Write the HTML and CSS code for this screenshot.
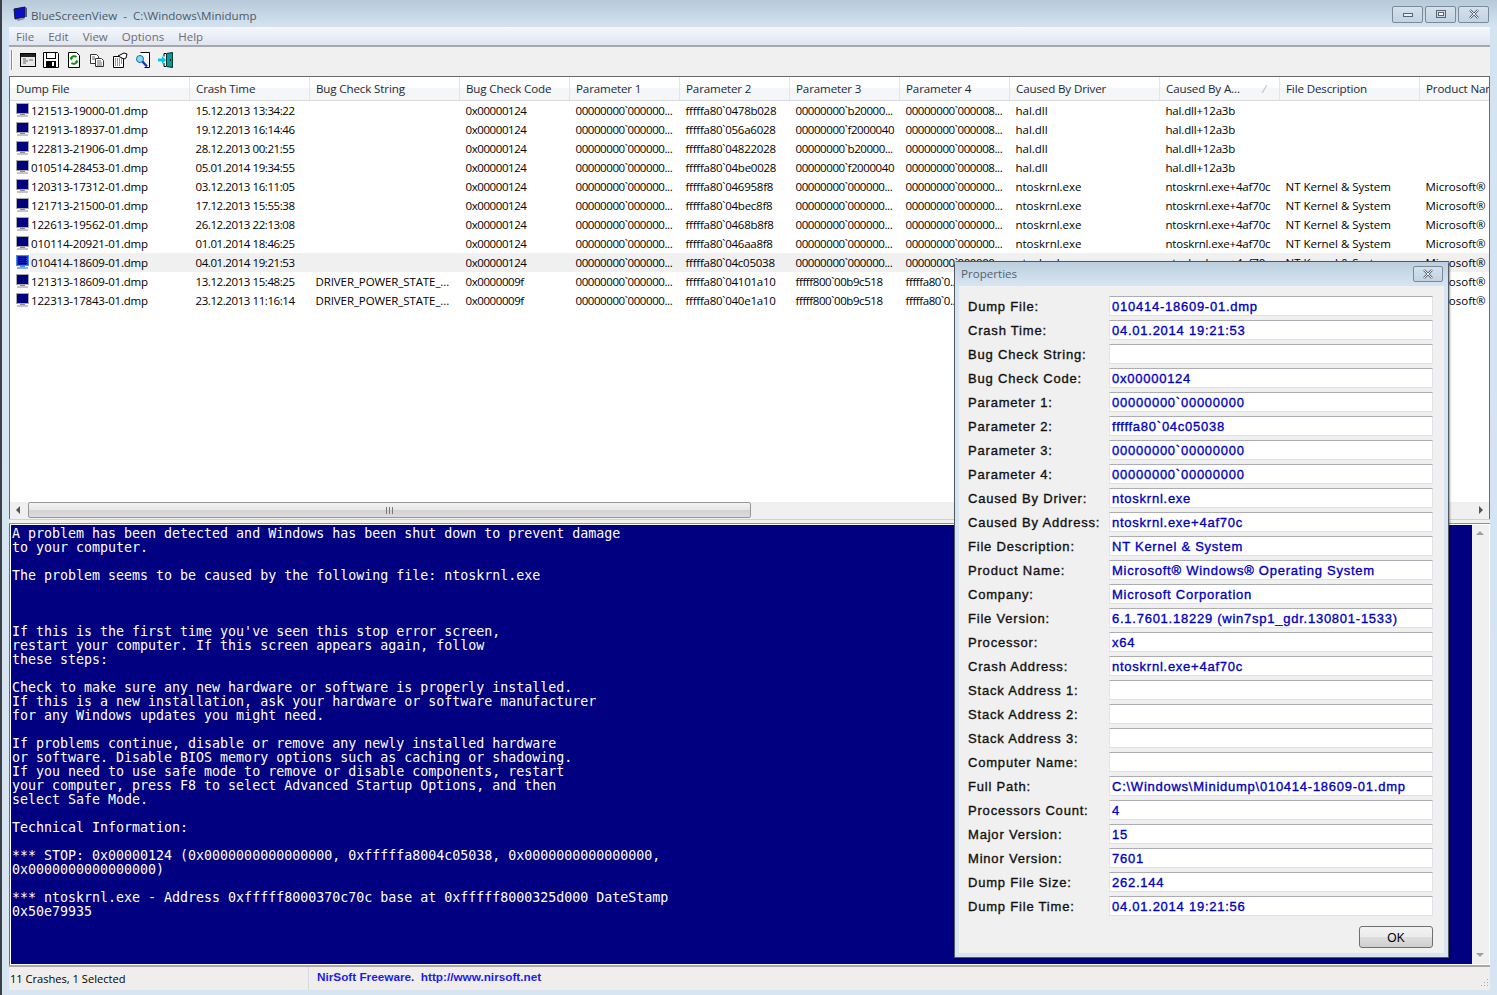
FILE: index.html
```html
<!DOCTYPE html>
<html lang="en">
<head>
<meta charset="utf-8">
<title>BlueScreenView</title>
<link rel="stylesheet" href="styles.css">
</head>
<body>
<svg class="defs" width="0" height="0" aria-hidden="true">
  <defs>
    <symbol id="pc" viewBox="0 0 15 15">
      <rect x="1.5" y="0.5" width="12" height="10" fill="#000080" stroke="#a9a9a9"/>
      <rect x="5" y="11" width="5" height="1" fill="#8c8c8c"/>
      <rect x="2" y="12" width="11" height="2" fill="#c4c4c4"/>
    </symbol>
    <symbol id="pcsel" viewBox="0 0 15 15">
      <rect x="1.5" y="0.5" width="12" height="10" fill="#1a3ee0" stroke="#4a8ae8"/>
      <path d="M3 2.5h9M3 4.5h9M3 6.5h9M3 8.5h9M4 1v9M6 1v9M8 1v9M10 1v9" stroke="#000080" stroke-width="1"/>
      <rect x="5" y="11" width="5" height="1" fill="#4a8ae8"/>
      <rect x="2" y="12" width="11" height="2" fill="#7fb0ee"/>
    </symbol>
  </defs>
</svg>
<div class="window">
  <header class="titlebar">
    <svg class="appicon" width="16" height="16" viewBox="0 0 16 16"><path d="M2 3 13 1v10L3 13z" fill="#0a10c8" stroke="#15153a"/><path d="M4 13l2 2 7-2-1-1z" fill="#8a8f9a"/><path d="M13 1l2 1v9l-2 0z" fill="#555a70"/></svg>
    <span class="apptitle">BlueScreenView &nbsp;-&nbsp; C:\Windows\Minidump</span>
    <div class="capbtns">
      <button class="cap capmin"><svg width="12" height="8" viewBox="0 0 12 8"><rect x="1.5" y="3.5" width="9" height="3" fill="#e8edf2" stroke="#5a6470"/></svg></button>
      <button class="cap capmax"><svg width="12" height="10" viewBox="0 0 12 10"><rect x="1.5" y="1.5" width="9" height="7" fill="none" stroke="#5a6470"/><rect x="3.5" y="3.5" width="5" height="3" fill="#fff" stroke="#5a6470"/></svg></button>
      <button class="cap capclose"><svg width="12" height="10" viewBox="0 0 12 10"><path d="M2 1l8 8M10 1 2 9" stroke="#5a6470" stroke-width="2.4"/><path d="M2 1l8 8M10 1 2 9" stroke="#eef2f6" stroke-width="1"/></svg></button>
    </div>
  </header>
  <nav class="menubar"><span>File</span><span>Edit</span><span>View</span><span>Options</span><span>Help</span></nav>
  <div class="toolbar">
    <i class="grip"></i>
    <svg class="tb" width="16" height="16" viewBox="0 0 16 16"><rect x="0.5" y="1.5" width="15" height="13" fill="#e8e8e8" stroke="#000"/><rect x="1" y="2" width="14" height="3" fill="#222"/><path d="M3 7h3M3 9h5M3 11h3M9 8h4" stroke="#666"/></svg>
    <svg class="tb" width="16" height="16" viewBox="0 0 16 16"><path d="M0.5 0.5h14l1 1v14H0.5z" fill="#fff" stroke="#000"/><rect x="3.500" y="0.500" width="9" height="6" fill="#fff" stroke="#000"/><rect x="3" y="9" width="10" height="6" fill="#000"/><rect x="9" y="10" width="2" height="4" fill="#fff"/></svg>
    <svg class="tb" width="16" height="16" viewBox="0 0 16 16"><path d="M2.5 0.5h8l3 3v12h-11z" fill="#fff" stroke="#000"/><path d="M10.5 5A3.5 3.5 0 0 0 5 6.5M5.5 11A3.500 3.500 0 0 0 11 9.500" fill="none" stroke="#109010" stroke-width="2"/><path d="M3.500 5.500 7 6 5 8.500zM12.500 10.500 9 10l2-2.500z" fill="#109010"/></svg>
    <svg class="tb" width="16" height="16" viewBox="0 0 16 16"><path d="M1.500 2.500h6l2 2v7h-8z" fill="#fff" stroke="#333"/><path d="M6.500 6.500h6l2 2v6h-8z" fill="#fff" stroke="#333"/><path d="M3 5h3M3 7h3M8 9h4M8 11h5M8 13h5" stroke="#666"/></svg>
    <svg class="tb" width="16" height="16" viewBox="0 0 16 16"><path d="M1.500 4.500h10v11h-10z" fill="#fff" stroke="#000"/><path d="M3 7h7M3 9h7M3 11h7M3 13h5" stroke="#333" stroke-dasharray="1 1"/><path d="M6 4 12 1l3 1-1 4-2 1z" fill="#fff" stroke="#000"/></svg>
    <svg class="tb" width="16" height="16" viewBox="0 0 16 16"><path d="M5.500 0.500h9v15h-5" fill="#fff" stroke="#000"/><circle cx="5" cy="7" r="3.500" fill="#7fe0e8" stroke="#2060c0"/><path d="M7.500 9.500 12 14.500" stroke="#1830c0" stroke-width="2.400"/></svg>
    <svg class="tb" width="16" height="16" viewBox="0 0 16 16"><path d="M8.500 1.500 14.500 0.500v15l-6-1z" fill="#0a9a9a" stroke="#003030"/><path d="M6 1.500h2M6 1.500v3M6 11v3.500h2" fill="none" stroke="#000"/><path d="M0 6.500h4V4l4 4-4 4V9.500H0z" fill="#00c8e8"/><rect x="12" y="7" width="1" height="2" fill="#002020"/></svg>
  </div>
  <section class="listpane">
    <table class="list">
      <colgroup><col class="c1"><col class="c2"><col class="c3"><col class="c4"><col class="c5"><col class="c5"><col class="c5"><col class="c5"><col class="c3"><col class="c2"><col class="c6"><col class="c7"></colgroup>
      <thead><tr><th>Dump File</th><th>Crash Time</th><th>Bug Check String</th><th>Bug Check Code</th><th>Parameter 1</th><th>Parameter 2</th><th>Parameter 3</th><th>Parameter 4</th><th>Caused By Driver</th><th class="sorted">Caused By A...<span class="sortmark">⁄</span></th><th>File Description</th><th>Product Name</th></tr></thead>
      <tbody>
        <tr><td><svg class="ri"><use href="#pc"/></svg>121513-19000-01.dmp</td><td>15.12.2013 13:34:22</td><td></td><td>0x00000124</td><td>00000000`000000...</td><td>fffffa80`0478b028</td><td>00000000`b20000...</td><td>00000000`000008...</td><td>hal.dll</td><td>hal.dll+12a3b</td><td></td><td></td></tr>
        <tr><td><svg class="ri"><use href="#pc"/></svg>121913-18937-01.dmp</td><td>19.12.2013 16:14:46</td><td></td><td>0x00000124</td><td>00000000`000000...</td><td>fffffa80`056a6028</td><td>00000000`f2000040</td><td>00000000`000008...</td><td>hal.dll</td><td>hal.dll+12a3b</td><td></td><td></td></tr>
        <tr><td><svg class="ri"><use href="#pc"/></svg>122813-21906-01.dmp</td><td>28.12.2013 00:21:55</td><td></td><td>0x00000124</td><td>00000000`000000...</td><td>fffffa80`04822028</td><td>00000000`b20000...</td><td>00000000`000008...</td><td>hal.dll</td><td>hal.dll+12a3b</td><td></td><td></td></tr>
        <tr><td><svg class="ri"><use href="#pc"/></svg>010514-28453-01.dmp</td><td>05.01.2014 19:34:55</td><td></td><td>0x00000124</td><td>00000000`000000...</td><td>fffffa80`04be0028</td><td>00000000`f2000040</td><td>00000000`000008...</td><td>hal.dll</td><td>hal.dll+12a3b</td><td></td><td></td></tr>
        <tr><td><svg class="ri"><use href="#pc"/></svg>120313-17312-01.dmp</td><td>03.12.2013 16:11:05</td><td></td><td>0x00000124</td><td>00000000`000000...</td><td>fffffa80`046958f8</td><td>00000000`000000...</td><td>00000000`000000...</td><td>ntoskrnl.exe</td><td>ntoskrnl.exe+4af70c</td><td>NT Kernel &amp; System</td><td>Microsoft®</td></tr>
        <tr><td><svg class="ri"><use href="#pc"/></svg>121713-21500-01.dmp</td><td>17.12.2013 15:55:38</td><td></td><td>0x00000124</td><td>00000000`000000...</td><td>fffffa80`04bec8f8</td><td>00000000`000000...</td><td>00000000`000000...</td><td>ntoskrnl.exe</td><td>ntoskrnl.exe+4af70c</td><td>NT Kernel &amp; System</td><td>Microsoft®</td></tr>
        <tr><td><svg class="ri"><use href="#pc"/></svg>122613-19562-01.dmp</td><td>26.12.2013 22:13:08</td><td></td><td>0x00000124</td><td>00000000`000000...</td><td>fffffa80`0468b8f8</td><td>00000000`000000...</td><td>00000000`000000...</td><td>ntoskrnl.exe</td><td>ntoskrnl.exe+4af70c</td><td>NT Kernel &amp; System</td><td>Microsoft®</td></tr>
        <tr><td><svg class="ri"><use href="#pc"/></svg>010114-20921-01.dmp</td><td>01.01.2014 18:46:25</td><td></td><td>0x00000124</td><td>00000000`000000...</td><td>fffffa80`046aa8f8</td><td>00000000`000000...</td><td>00000000`000000...</td><td>ntoskrnl.exe</td><td>ntoskrnl.exe+4af70c</td><td>NT Kernel &amp; System</td><td>Microsoft®</td></tr>
        <tr class="sel"><td><svg class="ri"><use href="#pcsel"/></svg><span class="seltext">010414-18609-01.dmp</span></td><td>04.01.2014 19:21:53</td><td></td><td>0x00000124</td><td>00000000`000000...</td><td>fffffa80`04c05038</td><td>00000000`000000...</td><td>00000000`000000...</td><td>ntoskrnl.exe</td><td>ntoskrnl.exe+4af70c</td><td>NT Kernel &amp; System</td><td>Microsoft®</td></tr>
        <tr><td><svg class="ri"><use href="#pc"/></svg>121313-18609-01.dmp</td><td>13.12.2013 15:48:25</td><td>DRIVER_POWER_STATE_...</td><td>0x0000009f</td><td>00000000`000000...</td><td>fffffa80`04101a10</td><td>fffff800`00b9c518</td><td>fffffa80`0...</td><td></td><td></td><td></td><td>Microsoft®</td></tr>
        <tr><td><svg class="ri"><use href="#pc"/></svg>122313-17843-01.dmp</td><td>23.12.2013 11:16:14</td><td>DRIVER_POWER_STATE_...</td><td>0x0000009f</td><td>00000000`000000...</td><td>fffffa80`040e1a10</td><td>fffff800`00b9c518</td><td>fffffa80`0...</td><td></td><td></td><td></td><td>Microsoft®</td></tr>
      </tbody>
    </table>
    <div class="hscroll">
      <span class="arrow al"></span>
      <div class="htrack"><div class="hthumb"><i></i></div></div>
      <span class="arrow ar"></span>
    </div>
  </section>
  <div class="splitter"></div>
  <section class="bsodpane">
    <pre class="bsod">A problem has been detected and Windows has been shut down to prevent damage
to your computer.

The problem seems to be caused by the following file: ntoskrnl.exe



If this is the first time you've seen this stop error screen,
restart your computer. If this screen appears again, follow
these steps:

Check to make sure any new hardware or software is properly installed.
If this is a new installation, ask your hardware or software manufacturer
for any Windows updates you might need.

If problems continue, disable or remove any newly installed hardware
or software. Disable BIOS memory options such as caching or shadowing.
If you need to use safe mode to remove or disable components, restart
your computer, press F8 to select Advanced Startup Options, and then
select Safe Mode.

Technical Information:

*** STOP: 0x00000124 (0x0000000000000000, 0xfffffa8004c05038, 0x0000000000000000,
0x0000000000000000)

*** ntoskrnl.exe - Address 0xfffff8000370c70c base at 0xfffff8000325d000 DateStamp
0x50e79935</pre>
    <div class="vscroll"><span class="arrow au"></span><span class="arrow ad"></span></div>
  </section>
  <footer class="statusbar">
    <div class="st1">11 Crashes, 1 Selected</div>
    <div class="st2">NirSoft Freeware.&nbsp; http://www.nirsoft.net</div>
    <svg class="sizer" width="12" height="12" viewBox="0 0 12 12"><path d="M10 2h1v1h-1zM7 5h1v1H7zM10 5h1v1h-1zM4 8h1v1H4zM7 8h1v1H7zM10 8h1v1h-1z" fill="#a8a8a8"/></svg>
  </footer>
</div>
<aside class="dialog">
  <div class="dlgtitle"><span>Properties</span>
    <button class="cap dlgclose"><svg width="12" height="10" viewBox="0 0 12 10"><path d="M2 1l8 8M10 1 2 9" stroke="#5a6470" stroke-width="2.400"/><path d="M2 1l8 8M10 1 2 9" stroke="#eef2f6" stroke-width="1"/></svg></button>
  </div>
  <div class="dlgbody">
    <dl class="props">
      <dt>Dump File:</dt><dd>010414-18609-01.dmp</dd>
      <dt>Crash Time:</dt><dd>04.01.2014 19:21:53</dd>
      <dt>Bug Check String:</dt><dd></dd>
      <dt>Bug Check Code:</dt><dd>0x00000124</dd>
      <dt>Parameter 1:</dt><dd>00000000`00000000</dd>
      <dt>Parameter 2:</dt><dd>fffffa80`04c05038</dd>
      <dt>Parameter 3:</dt><dd>00000000`00000000</dd>
      <dt>Parameter 4:</dt><dd>00000000`00000000</dd>
      <dt>Caused By Driver:</dt><dd>ntoskrnl.exe</dd>
      <dt>Caused By Address:</dt><dd>ntoskrnl.exe+4af70c</dd>
      <dt>File Description:</dt><dd>NT Kernel &amp; System</dd>
      <dt>Product Name:</dt><dd>Microsoft® Windows® Operating System</dd>
      <dt>Company:</dt><dd>Microsoft Corporation</dd>
      <dt>File Version:</dt><dd>6.1.7601.18229 (win7sp1_gdr.130801-1533)</dd>
      <dt>Processor:</dt><dd>x64</dd>
      <dt>Crash Address:</dt><dd>ntoskrnl.exe+4af70c</dd>
      <dt>Stack Address 1:</dt><dd></dd>
      <dt>Stack Address 2:</dt><dd></dd>
      <dt>Stack Address 3:</dt><dd></dd>
      <dt>Computer Name:</dt><dd></dd>
      <dt>Full Path:</dt><dd>C:\Windows\Minidump\010414-18609-01.dmp</dd>
      <dt>Processors Count:</dt><dd>4</dd>
      <dt>Major Version:</dt><dd>15</dd>
      <dt>Minor Version:</dt><dd>7601</dd>
      <dt>Dump File Size:</dt><dd>262.144</dd>
      <dt>Dump File Time:</dt><dd>04.01.2014 19:21:56</dd>
    </dl>
    <div class="dlgfoot"><button class="okbtn">OK</button></div>
  </div>
</aside>
</body>
</html>
```
FILE: styles.css
```css
* { box-sizing: border-box; }
html, body { margin: 0; height: 995px; overflow: hidden; }
body { font-family: "Open Sans", "Noto Sans", sans-serif; font-size: 12px; color: #000; background: #d7e5f2; position: relative; }
.defs { position: absolute; }
.window { height: 995px; width: 1497px; padding: 0 7px 5px 0; border-left: 2px solid #3c4046; display: flex; flex-direction: column; background: linear-gradient(180deg, #b7cad9 0, #d4e3f0 27px, #d7e5f2 100%); }

.titlebar { height: 27px; display: flex; align-items: center; padding: 3px 0 0 10px; flex: none; }
.appicon { margin-right: 3px; margin-top: -3px; }
.apptitle { color: #4c5964; font-size: 11.6px; }
.capbtns { margin-left: auto; display: flex; gap: 2px; margin-right: 1px; margin-top: -2px; }
.cap { width: 31px; height: 17px; padding: 0; border: 1px solid #7b8a98; border-radius: 2px; background: linear-gradient(180deg, #d5e1ec, #c2d3e2); display: flex; align-items: center; justify-content: center; }

.menubar { height: 20px; margin-left: 7px; flex: none; display: flex; align-items: center; gap: 14px; padding: 2px 0 0 7px; background: linear-gradient(180deg, #f6f8fc 0, #dfe5f2 100%); border-bottom: 2px solid #a8a8a8; color: #6d6d6d; font-size: 11.5px; }
.menubar span { line-height: 16px; }

.toolbar { height: 29px; margin-left: 7px; flex: none; background: #f0f0f0; display: flex; align-items: center; gap: 7px; padding: 0 0 3px 2px; }
.grip { height: 20px; background: #8a8a8a; border-right: 1px solid #fff; width: 2px; margin-right: 0; }
.tb { flex: none; }

.listpane { margin-left: 7px; height: 443px; flex: none; border: 1px solid #6b6b6b; border-bottom: 0; background: #fff; display: flex; flex-direction: column; overflow: hidden; }
.list { border-collapse: collapse; table-layout: fixed; width: 1510px; flex: none; }
.c1 { width: 179.5px; } .c2 { width: 120px; } .c3 { width: 150px; } .c4 { width: 110px; } .c5 { width: 110px; } .c6 { width: 140px; } .c7 { width: 130px; }
.list thead th { height: 23px; padding: 0 0 0 6px; text-align: left; font-weight: 400; font-size: 11.6px; letter-spacing: -0.14px; background: linear-gradient(180deg, #fff 0, #fff 50%, #f4f6f8 50%, #f4f6f8 100%); border-right: 1px solid #e3e5e7; border-bottom: 1px solid #d8dadc; white-space: nowrap; overflow: hidden; color: #1c2a3a; position: relative; }
.sortmark { position: absolute; right: 14px; top: 4px; color: #aaa; font-size: 11px; }
.list tbody td { height: 19px; padding: 0 0 0 6px; white-space: nowrap; overflow: hidden; font-size: 11.5px; letter-spacing: -0.42px; line-height: 19px; }
.list tbody td:first-child { padding-left: 5px; display: flex; align-items: center; gap: 1px; letter-spacing: -0.2px; }
.list tbody td:nth-child(3) { letter-spacing: -0.1px; }
.list tbody td:nth-child(6) { letter-spacing: -0.26px; }
.list tbody td:nth-child(n+9) { letter-spacing: -0.02px; }
.list tbody td:nth-child(10) { letter-spacing: -0.18px; }
.ri { width: 15px; height: 15px; flex: none; }
.list tr.sel td { background: #f0f0f0; }
.list tr.sel td:first-child { background: linear-gradient(90deg, #fff 20px, #f0f0f0 20px); }

.hscroll { margin-top: auto; height: 17px; flex: none; background: #f0f0f0; display: flex; align-items: center; }
.arrow { flex: none; width: 17px; height: 17px; position: relative; display: block; }
.arrow::after { content: ""; position: absolute; border: 4px solid transparent; }
.al::after { border-right: 4px solid #555; border-left: 0; left: 6px; top: 4px; }
.ar::after { border-left: 4px solid #555; border-right: 0; left: 7px; top: 4px; }
.au::after { border-bottom: 4px solid #a0a0a0; border-top: 0; left: 4px; top: 6px; }
.ad::after { border-top: 4px solid #a0a0a0; border-bottom: 0; left: 4px; top: 7px; }
.htrack { flex: 1; height: 17px; }
.hthumb { width: 723px; height: 16px; margin-left: 1px; border: 1px solid #979797; border-radius: 2px; background: linear-gradient(180deg, #f3f3f3 0, #e6e6e6 50%, #d2d2d2 51%, #dcdcdc 100%); display: flex; align-items: center; justify-content: center; }
.hthumb i { width: 7px; height: 7px; background: repeating-linear-gradient(90deg, #777 0 1px, transparent 1px 3px); }

.splitter { height: 5px; margin-left: 7px; flex: none; background: #f0f0f0; border-bottom: 1px solid #8f8f8f; border-top: 1px solid #d0d0d0; }

.bsodpane { margin-left: 7px; height: 441px; flex: none; display: flex; background: #fff; padding: 1px 1px 0 1px; border-left: 1px solid #6b6b6b; }
.bsod { flex: 1; margin: 0; height: 439px; background: #000080; color: #fff; font-family: "DejaVu Sans Mono", monospace; font-size: 13.330px; line-height: 14px; padding: 2px 0 0 1px; overflow: hidden; letter-spacing: -0.020px; }
.vscroll { width: 17px; flex: none; background: #f0f0f0; display: flex; flex-direction: column; justify-content: space-between; height: 439px; padding-bottom: 1px; }

.statusbar { height: 25px; margin-left: 7px; flex: 1; display: flex; align-items: stretch; background: #f0eeec; border-top: 2px solid #a8a8a8; position: relative; font-size: 11.1px; }
.st1 { width: 300px; padding: 3px 0 0 1px; border-right: 1px solid #d8d8d8; line-height: 18px; }
.st2 { padding: 2px 0 0 8px; font-family: "Liberation Sans", sans-serif; font-size: 11.750px; font-weight: 700; color: #1c1cf0; line-height: 16px; }
.sizer { position: absolute; right: 1px; bottom: 1px; }

.dialog { position: absolute; left: 954px; top: 261px; width: 495px; height: 697px; border: 1px solid #55595e; border-radius: 3px 3px 0 0; background: #d7e5f2; padding: 0 4px 4px; display: flex; flex-direction: column; box-shadow: 1px 1px 2px rgba(0,0,0,.4); }
.dlgtitle { height: 24px; flex: none; margin: 0 -4px; padding: 0 5px 2px 6px; display: flex; align-items: center; justify-content: space-between; background: linear-gradient(180deg, #bccfde 0, #d7e5f2 100%); color: #55626e; font-size: 11.6px; }
.dlgclose { width: 30px; height: 16px; margin-top: 2px; }
.dlgbody { flex: 1; background: #f0f0f0; padding: 10px 0 0 9px; display: flex; flex-direction: column; }
.props { margin: 0; display: grid; grid-template-columns: 141px 324px; grid-auto-rows: 20px; row-gap: 4px; }
.props dt { font-family: "Liberation Sans", sans-serif; font-size: 13px; letter-spacing: .8px; line-height: 21px; color: #111; -webkit-text-stroke: 0.35px #111; white-space: nowrap; }
.props dd { margin: 0; background: #fff; border: 1px solid #dfe3e8; border-top-color: #abadb3; padding-left: 2px; font-family: "Liberation Sans", sans-serif; font-size: 13px; letter-spacing: .75px; line-height: 19px; color: #0000c0; -webkit-text-stroke: 0.35px #0000c0; white-space: nowrap; overflow: hidden; }
.dlgfoot { display: flex; justify-content: flex-end; padding: 10px 11px 0 0; }
.okbtn { width: 74px; height: 22px; border: 1px solid #707070; border-radius: 3px; background: linear-gradient(180deg, #f2f2f2 0, #ebebeb 50%, #dddddd 51%, #cfcfcf 100%); font-family: "Liberation Sans", sans-serif; font-size: 12px; color: #000; padding: 1px 0 0; }
```
